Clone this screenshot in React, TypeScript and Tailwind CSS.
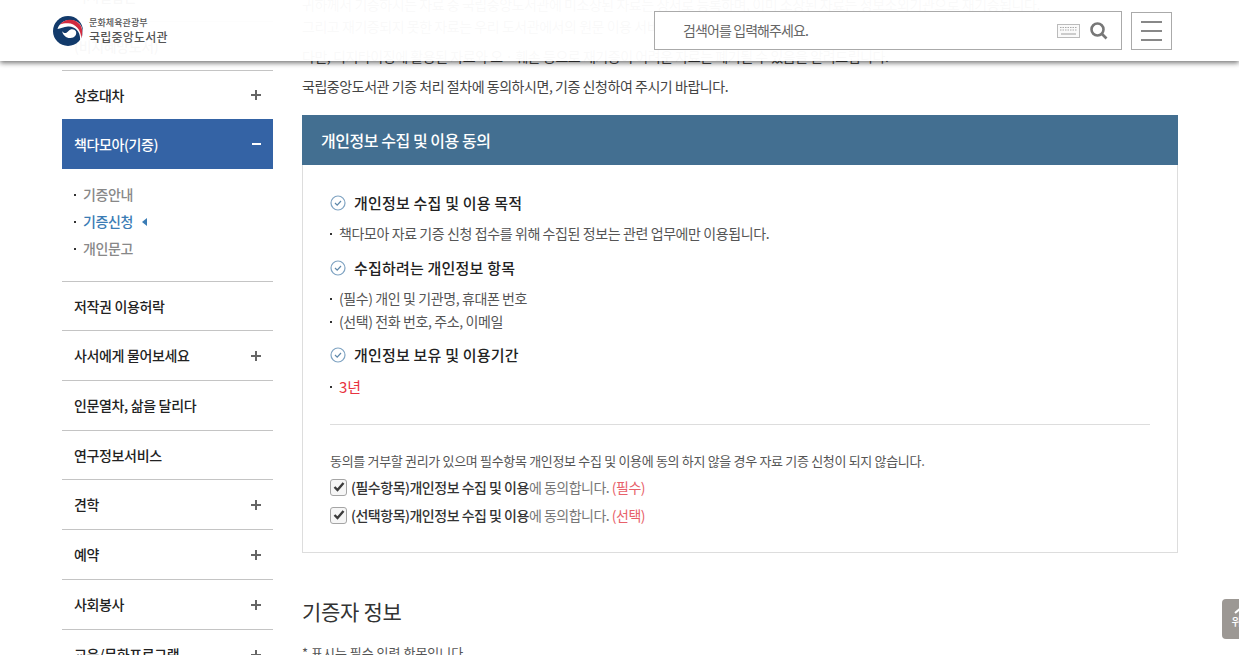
const font = { fontFamily: '"Noto Sans CJK KR", "Noto Sans", sans-serif' };

const Plus = () => (
  <svg width="10" height="10" viewBox="0 0 10 10" className="text-[#666]">
    <path d="M0 5h10M5 0v10" stroke="currentColor" strokeWidth="2" />
  </svg>
);

const Logo = () => (
  <svg width="30" height="30" viewBox="0 0 30 30">
    <circle cx="15" cy="15" r="15" fill="#123a6b" />
    <path d="M4.500 13C7 3.500 20 1 26.500 7.500 31 12.500 30.500 20 27 25 28 16 22.500 10 15 10.500 10.500 10.800 7.500 12.500 4.500 13Z" fill="#fff" />
    <path d="M7 8.500C11.500 2.500 21.500 2 26.500 8 30 12 29.800 18 28.200 22 28 14 22.500 7.500 15 7.300 12 7.200 9.500 7.500 7 8.500Z" fill="#d22b3f" />
    <path d="M9 15C11 18 13.500 17.500 15.500 15 17.500 12.500 21.500 12.500 23 15.500 24 19 21.500 22 17.500 22 13.500 22.300 10 19.500 9 15Z" fill="#fff" />
  </svg>
);

const Check = () => (
  <svg width="16" height="16" viewBox="0 0 16 16" className="shrink-0">
    <circle cx="8" cy="8" r="7" fill="none" stroke="#7fa3c2" strokeWidth="1.200" />
    <path d="M5 8l2.200 2.200L11 6" fill="none" stroke="#5f88aa" strokeWidth="1.200" />
  </svg>
);

const Box = () => (
  <span className="flex h-[17px] w-[17px] shrink-0 items-center justify-center rounded-[3px] border border-[#a5a5a5] bg-[#f6f6f6]">
    <svg width="12" height="10" viewBox="0 0 12 10">
      <path d="M1.500 5l3 3 6-7" fill="none" stroke="#3c3c3c" strokeWidth="2.400" />
    </svg>
  </span>
);

const Dot = ({ className = "" }: { className?: string }) => (
  <span className={`h-[2px] w-[2px] shrink-0 bg-[#333] ${className}`}></span>
);

const Section = ({ title }: { title: string }) => (
  <div className="flex items-center gap-2">
    <Check />
    <h4 className="text-[15px] font-medium leading-[22px] tracking-[0.2px] text-[#222]">{title}</h4>
  </div>
);

const Li = ({ children, className = "" }: { children: React.ReactNode; className?: string }) => (
  <li className={`flex items-center gap-[7px] text-[14px] leading-[23px] tracking-[-0.4px] text-[#555] ${className}`}>
    <Dot />
    {children}
  </li>
);

const SideRow = ({ label, plus, h = "h-[50px]" }: { label: string; plus?: boolean; h?: string }) => (
  <li className={`flex items-center justify-between border-t border-[#c4c4c4] pl-3 pr-3 ${h}`}>
    <span className="text-[14px] font-medium tracking-[-0.35px] text-[#222]">{label}</span>
    {plus && <Plus />}
  </li>
);

const Consent = ({ kind }: { kind: string }) => (
  <label className="flex items-center gap-[4px] text-[14px] leading-[28px] tracking-[-0.5px]">
    <Box />
    <span>
      <b className="font-medium text-[#333]">({kind}항목)개인정보 수집 및 이용</b>
      <span className="text-[#777]">에 동의합니다. </span>
      <span className="text-[#e8616a]">({kind})</span>
    </span>
  </label>
);

const App = () => {
  return (
    <div className="relative h-[655px] w-full overflow-hidden bg-white" style={font}>
      {/* 스크롤 된 본문 */}
      <div className="-mt-[28px] flex items-start pl-[62px]">
        <nav className="w-[211px] shrink-0">
          <ul>
            <li className="h-[49px] border-t border-[#c4c4c4] pl-3 pt-[13px] text-[14px] font-medium tracking-[-0.35px] text-[#222]">디지털납본</li>
            <SideRow label="(비지혜망도서)" h="h-[49px]" />
            <SideRow label="상호대차" plus h="h-[49px]" />
            <li className="flex h-[50px] items-center justify-between bg-[#3463a5] pl-3 pr-3">
              <span className="text-[14px] font-medium tracking-[-0.4px] text-white">책다모아(기증)</span>
              <span className="h-[2px] w-[9px] bg-white"></span>
            </li>
            <li className="h-[112px] pl-3 pt-[12px]">
              <ul className="text-[14px] font-medium leading-[27px] tracking-[-0.35px] text-[#888]">
                <li className="flex items-center gap-[7px]"><Dot />기증안내</li>
                <li className="flex items-center gap-[7px] text-[#3a7cb5]">
                  <Dot />기증신청
                  <span className="ml-[2px] h-0 w-0 border-y-[4px] border-r-[5px] border-y-transparent border-r-[#3a7cb5]"></span>
                </li>
                <li className="flex items-center gap-[7px]"><Dot />개인문고</li>
              </ul>
            </li>
            <SideRow label="저작권 이용허락" h="h-[49px]" />
            <SideRow label="사서에게 물어보세요" plus />
            <SideRow label="인문열차, 삶을 달리다" />
            <SideRow label="연구정보서비스" h="h-[49px]" />
            <SideRow label="견학" plus />
            <SideRow label="예약" plus />
            <SideRow label="사회봉사" plus />
            <SideRow label="교육/문화프로그램" plus />
          </ul>
        </nav>

        <main className="ml-[29px] w-[876px] shrink-0 pt-[21px]">
          <div className="text-[14px] tracking-[-0.45px] text-[#444]">
            <p className="leading-[22px]">귀하께서 기증하시는 자료 중 국립중앙도서관에 미소장된 자료는 장서로 등록하며, 이미 소장된 자료는 정보소외기관으로 재기증됩니다.</p>
            <p className="leading-[22px]">그리고 재기증되지 못한 자료는 우리 도서관에서의 원문 이용 서비스를 위해 디지타이징 될 수 있습니다.</p>
            <p className="mt-2 leading-[22px]">다만, 디지타이징에 활용된 자료와 오 · 훼손 등으로 재기증이 어려운 자료는 폐기될 수 있음을 알려드립니다.</p>
            <p className="mt-2 leading-[22px]">국립중앙도서관 기증 처리 절차에 동의하시면, 기증 신청하여 주시기 바랍니다.</p>
          </div>

          <h3 className="mt-[18px] flex h-[50px] items-center bg-[#436f91] pl-[19px] text-[16px] font-medium tracking-[-0.45px] text-white">개인정보 수집 및 이용 동의</h3>

          <div className="h-[388px] border border-t-0 border-[#ddd] px-[27px] pt-[27px]">
            <Section title="개인정보 수집 및 이용 목적" />
            <ul className="mt-[8px]">
              <Li>책다모아 자료 기증 신청 접수를 위해 수집된 정보는 관련 업무에만 이용됩니다.</Li>
            </ul>
            <div className="mt-[12px]"><Section title="수집하려는 개인정보 항목" /></div>
            <ul className="mt-[8px]">
              <Li>(필수) 개인 및 기관명, 휴대폰 번호</Li>
              <Li>(선택) 전화 번호, 주소, 이메일</Li>
            </ul>
            <div className="mt-[11px]"><Section title="개인정보 보유 및 이용기간" /></div>
            <ul className="mt-[9px]">
              <Li className="!text-[15px] !tracking-[-0.2px] !text-[#e8343f]">3년</Li>
            </ul>
            <hr className="mt-[26px] border-[#ddd]" />
            <p className="mt-[25px] text-[13px] leading-[22px] tracking-[-0.32px] text-[#555]">동의를 거부할 권리가 있으며 필수항목 개인정보 수집 및 이용에 동의 하지 않을 경우 자료 기증 신청이 되지 않습니다.</p>
            <div className="mt-[1px]">
              <Consent kind="필수" />
              <Consent kind="선택" />
            </div>
          </div>

          <h3 className="mt-[42px] text-[21px] font-normal leading-[32px] tracking-[-0.3px] text-[#333]">기증자 정보</h3>
          <p className="mt-[15px] text-[13px] leading-[22px] text-[#555]">* 표시는 필수 입력 항목입니다.</p>
        </main>
      </div>

      {/* 고정 헤더 */}
      <header className="absolute left-0 right-0 top-0 flex h-[61px] items-center bg-[#fffffff7] pl-[53px] pr-[67px] shadow-[0_2px_5px_rgba(0,0,0,0.55)]">
        <a className="flex items-center gap-[6px]">
          <Logo />
          <span className="flex flex-col text-[#555]">
            <span className="text-[9px] font-medium leading-[12px] tracking-[0.1px]">문화체육관광부</span>
            <span className="text-[12px] font-medium leading-[15px] tracking-[0.2px]">국립중앙도서관</span>
          </span>
        </a>
        <div className="ml-auto flex items-center gap-[9px]">
          <div className="flex h-[39px] w-[468px] items-center border border-[#aaa] bg-white pl-[28px] pr-[13px]">
            <span className="text-[14px] tracking-[-0.9px] text-[#666]">검색어를 입력해주세요.</span>
            <svg width="23" height="14" viewBox="0 0 23 14" className="ml-auto">
              <rect x=".5" y=".5" width="22" height="13" fill="#fafafa" stroke="#bbb" />
              <path d="M3 3.500h17M3 6h17" stroke="#aaa" strokeDasharray="1.500 1" />
              <path d="M4 10h15" stroke="#ccc" strokeWidth="2" />
            </svg>
            <svg width="18" height="18" viewBox="0 0 18 18" className="ml-[10px]">
              <circle cx="7.500" cy="7.500" r="6" fill="none" stroke="#777" strokeWidth="2.600" />
              <path d="M12 12l4.500 4.500" stroke="#777" strokeWidth="2.600" />
            </svg>
          </div>
          <button className="flex h-[38px] w-[41px] flex-col items-center justify-center gap-[7px] border border-[#aaa] bg-white">
            <span className="h-[2px] w-[21px] bg-[#888]"></span>
            <span className="h-[2px] w-[21px] bg-[#888]"></span>
            <span className="h-[2px] w-[21px] bg-[#888]"></span>
          </button>
        </div>
      </header>

      <a className="absolute left-[1222px] top-[599px] flex h-[40px] w-[40px] flex-col items-center rounded-[4px] bg-[#9c9894] pr-[1px] pt-[6px] text-white">
        <svg width="18" height="9" viewBox="0 0 18 9">
          <path d="M2 8l7-6 7 6" fill="none" stroke="#fff" strokeWidth="2" />
        </svg>
        <span className="text-[11px] font-medium leading-[14px]">위로</span>
      </a>
    </div>
  );
};

export default App;
